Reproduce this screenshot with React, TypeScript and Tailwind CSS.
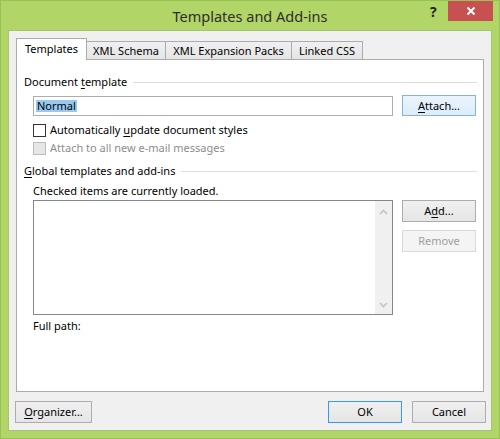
import React from "react";

function Btn({
  children,
  className = "",
}: {
  children: React.ReactNode;
  className?: string;
}) {
  return (
    <div
      className={`h-[22px] flex items-center justify-center border border-[#adadad] bg-gradient-to-b from-[#f0f0f0] to-[#e5e5e5] shrink-0 ${className}`}
    >
      {children}
    </div>
  );
}

function U({ children }: { children: React.ReactNode }) {
  return <span className="underline underline-offset-[2px]">{children}</span>;
}

function Chevron({ up }: { up?: boolean }) {
  return (
    <svg width="9" height="6" viewBox="0 0 9 6">
      <path
        d={up ? "M1 5 L4.5 1.5 L8 5" : "M1 1 L4.5 4.5 L8 1"}
        fill="none"
        stroke="#c4c4c4"
        strokeWidth="1.6"
      />
    </svg>
  );
}

export default function App() {
  return (
    <div className="w-[500px] h-[439px] bg-[#b1d567] border border-[#97c255] flex flex-col font-['Noto_Sans',sans-serif] text-[11px] leading-[16px] text-black overflow-hidden">
      {/* title bar */}
      <div className="relative h-[29px] shrink-0 flex items-center justify-center">
        <span className="text-[14.5px] text-[#2e2e2e] mt-[1px]">Templates and Add-ins</span>
        <span className="absolute left-[429px] top-[3px] font-bold text-[14px] text-[#222]">?</span>
        <div className="absolute left-[447px] top-[-1px] w-[45px] h-[21px] bg-[#c75050] flex items-center justify-center">
          <svg width="10" height="10" viewBox="0 0 10 10">
            <path d="M1.5 1.5 L8.5 8.5 M8.5 1.5 L1.5 8.5" stroke="#fff" strokeWidth="2" />
          </svg>
        </div>
      </div>

      {/* client area */}
      <div className="ml-[7px] w-[484px] h-[401px] bg-[#f0f0f0] border border-[#a3c574] flex flex-col pt-[7px] px-[6px]">
        {/* tabs */}
        <div className="h-[21px] flex items-end relative z-10 ml-[1px]">
          <div className="w-[71px] h-[22px] mb-[-1px] bg-white border-x border-t border-[#acacac] flex items-center justify-center pb-[1px]">
            Templates
          </div>
          <div className="w-[80px] h-[18px] ml-[-1px] bg-gradient-to-b from-[#f0f0f0] to-[#e5e5e5] border-x border-t border-[#acacac] flex items-center justify-center">
            XML Schema
          </div>
          <div className="w-[127px] h-[18px] ml-[-1px] bg-gradient-to-b from-[#f0f0f0] to-[#e5e5e5] border-x border-t border-[#acacac] flex items-center justify-center">
            XML Expansion Packs
          </div>
          <div className="w-[72px] h-[18px] ml-[-1px] bg-gradient-to-b from-[#f0f0f0] to-[#e5e5e5] border-x border-t border-[#acacac] flex items-center justify-center">
            Linked CSS
          </div>
        </div>

        {/* panel */}
        <div className="ml-[1px] w-[468px] h-[333px] shrink-0 bg-white border border-[#acacac] flex flex-col">
          <div className="mt-[14px] ml-[7px] mr-[6px] flex items-center">
            <span>
              Document <U>t</U>emplate
            </span>
            <div className="flex-1 ml-[6px] h-px bg-[#dcdcdc]" />
          </div>

          <div className="mt-[5px] pl-[16px] flex items-center h-[21px]">
            <div className="w-[360px] h-[20px] border border-[#abadb3] flex items-center pl-[2px]">
              <span className="bg-[#99c9ef] px-[1px] leading-[12px] h-[12px] flex items-center">Normal</span>
            </div>
            <div className="ml-[9px] w-[74px] h-[21px] border border-[#7eb4ea] bg-gradient-to-b from-[#ecf4fc] to-[#dcecfc] flex items-center justify-center">
              <span>
                <U>A</U>ttach...
              </span>
            </div>
          </div>

          <div className="mt-[6px] pl-[16px] flex items-center h-[16px]">
            <div className="w-[13px] h-[13px] border border-[#333] bg-white shrink-0" />
            <span className="ml-[4px]">
              Automatically <U>u</U>pdate document styles
            </span>
          </div>
          <div className="mt-[2px] pl-[16px] flex items-center h-[16px]">
            <div className="w-[13px] h-[13px] border border-[#bcbcbc] bg-[#e6e6e6] shrink-0" />
            <span className="ml-[4px] text-[#8d8d8d]">Attach to all new e-mail messages</span>
          </div>

          <div className="mt-[7px] ml-[7px] mr-[6px] flex items-center">
            <span>
              <U>G</U>lobal templates and add-ins
            </span>
            <div className="flex-1 ml-[6px] h-px bg-[#dcdcdc]" />
          </div>

          <div className="mt-[4px] pl-[16px]">Checked items are currently loaded.</div>

          <div className="mt-[1px] pl-[16px] flex items-start">
            <div className="w-[360px] h-[115px] border border-[#828790] flex">
              <div className="flex-1" />
              <div className="w-[17px] bg-[#f0f0f0] flex flex-col items-center justify-between pt-[8px] pb-[6px]">
                <Chevron up />
                <Chevron />
              </div>
            </div>
            <div className="ml-[9px] flex flex-col">
              <Btn className="w-[74px]">
                <span>
                  A<U>d</U>d...
                </span>
              </Btn>
              <div className="mt-[8px] w-[74px] h-[22px] border border-[#d9d9d9] bg-[#f4f4f4] flex items-center justify-center text-[#a0a0a0]">
                Remove
              </div>
            </div>
          </div>

          <div className="mt-[3px] pl-[16px]">Full path:</div>
        </div>

        {/* bottom buttons */}
        <div className="mt-[9px] flex items-center">
          <Btn className="w-[77px]">
            <span>
              <U>O</U>rganizer...
            </span>
          </Btn>
          <div className="flex-1" />
          <div className="w-[74px] h-[22px] flex items-center justify-center border border-[#3399ff] bg-gradient-to-b from-[#f0f0f0] to-[#e5e5e5]">
            OK
          </div>
          <Btn className="w-[74px] ml-[10px] mr-[-1px]">Cancel</Btn>
        </div>
      </div>
    </div>
  );
}
